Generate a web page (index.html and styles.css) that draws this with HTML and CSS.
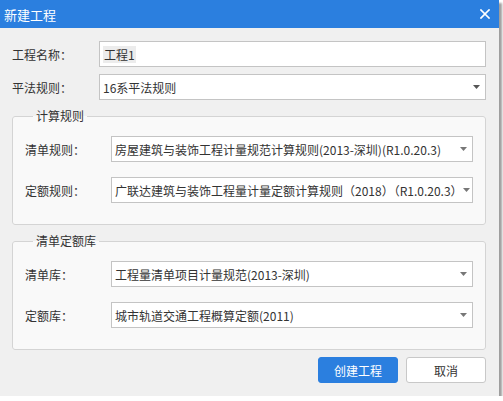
FILE: index.html
```html
<!DOCTYPE html>
<html lang="zh-CN">
<head>
<meta charset="utf-8">
<title>新建工程</title>
<link rel="stylesheet" href="styles.css">
</head>
<body>
<div class="dialog">
  <div class="titlebar">
    <span class="title">新建工程</span>
    <svg class="close" width="10" height="10" viewBox="0 0 10 10"><path d="M1 1 L9 9 M9 1 L1 9" stroke="#fff" stroke-width="1.7" stroke-linecap="square"/></svg>
  </div>
  <div class="content">
    <div class="row first">
      <span class="label">工程名称：</span>
      <div class="field"><span class="sel">工程1</span></div>
    </div>
    <div class="row second">
      <span class="label">平法规则：</span>
      <div class="field"><span class="text">16系平法规则</span><svg class="arrow" width="7" height="4" viewBox="0 0 7 4"><path d="M0 0 H7 L3.5 4 Z" fill="#555"/></svg></div>
    </div>
    <fieldset class="group calc">
      <legend>计算规则</legend>
      <div class="grow">
        <span class="glabel">清单规则：</span>
        <div class="field"><span class="text">房屋建筑与装饰工程计量规范计算规则(2013-深圳)(R1.0.20.3)</span><svg class="arrow" width="7" height="4" viewBox="0 0 7 4"><path d="M0 0 H7 L3.5 4 Z" fill="#777"/></svg></div>
      </div>
      <div class="grow">
        <span class="glabel">定额规则：</span>
        <div class="field"><span class="text">广联达建筑与装饰工程量计量定额计算规则（2018）（R1.0.20.3）</span><svg class="arrow" width="7" height="4" viewBox="0 0 7 4"><path d="M0 0 H7 L3.5 4 Z" fill="#777"/></svg></div>
      </div>
    </fieldset>
    <fieldset class="group lib">
      <legend>清单定额库</legend>
      <div class="grow">
        <span class="glabel">清单库：</span>
        <div class="field"><span class="text">工程量清单项目计量规范(2013-深圳)</span><svg class="arrow" width="7" height="4" viewBox="0 0 7 4"><path d="M0 0 H7 L3.5 4 Z" fill="#777"/></svg></div>
      </div>
      <div class="grow">
        <span class="glabel">定额库：</span>
        <div class="field"><span class="text">城市轨道交通工程概算定额(2011)</span><svg class="arrow" width="7" height="4" viewBox="0 0 7 4"><path d="M0 0 H7 L3.5 4 Z" fill="#777"/></svg></div>
      </div>
    </fieldset>
    <div class="buttons">
      <button class="btn primary">创建工程</button>
      <button class="btn">取消</button>
    </div>
  </div>
</div>
</body>
</html>
```
FILE: styles.css
```css
html, body {
  margin: 0;
  padding: 0;
  background: #ffffff;
}
body {
  font-family: "Noto Sans CJK SC", "Noto Sans", sans-serif;
  font-size: 12px;
  color: #333;
}
.dialog {
  width: 499px;
  height: 396px;
  background: #f0f0f0;
  box-shadow: 3px 3px 2px rgba(0, 0, 0, 0.38);
  display: flex;
  flex-direction: column;
}
.titlebar {
  height: 28px;
  background: #2b7fdf;
  display: flex;
  align-items: center;
  justify-content: space-between;
  padding: 0 9px 0 4px;
  flex: none;
}
.title {
  color: #fff;
  font-size: 13px;
  line-height: 16px;
  padding-top: 1px;
}
.close {
  display: block;
}
.content {
  padding: 13px 13px 0 12px;
  display: flex;
  flex-direction: column;
}
.row {
  display: flex;
  align-items: center;
  height: 26px;
}
.row.second {
  margin-top: 7px;
}
.label {
  width: 87px;
  flex: none;
  line-height: 16px;
  padding-top: 2px;
}
.field {
  flex: 1;
  height: 26px;
  box-sizing: border-box;
  border: 1px solid #c4c4c4;
  background: #fff;
  display: flex;
  align-items: center;
  padding: 0 5px 0 3px;
  line-height: 16px;
  white-space: nowrap;
  overflow: hidden;
}
.field .text {
  flex: 1;
  padding-top: 1px;
}
.field .sel {
  background: #ececec;
  padding: 1px 1px 0 1px;
}
.arrow {
  flex: none;
  display: block;
}
.group {
  margin: 8px 0 0 0;
  padding: 12px 12px 21px 12px;
  border: 1px solid #d4d4d4;
  border-radius: 3px;
  background: #f9f9f9;
  min-inline-size: 0;
  display: flex;
  flex-direction: column;
  gap: 15px;
}
.group legend {
  margin-left: 8px;
  padding: 0 3px;
  line-height: 16px;
  font-size: 12px;
  color: #333;
}
.grow {
  display: flex;
  align-items: center;
  height: 26px;
}
.glabel {
  width: 86px;
  flex: none;
  line-height: 16px;
  padding-top: 2px;
}
.buttons {
  margin-top: 7px;
  display: flex;
  justify-content: flex-end;
  gap: 8px;
}
.btn {
  width: 80px;
  height: 26px;
  box-sizing: border-box;
  border: 1px solid #c8c8c8;
  border-radius: 3px;
  background: #fff;
  color: #333;
  font-family: "Noto Sans CJK SC", "Noto Sans", sans-serif;
  font-size: 12px;
  line-height: 16px;
  padding: 1px 0 0 0;
}
.btn.primary {
  background: #2b7fdf;
  border-color: #2b7fdf;
  color: #fff;
}
```
